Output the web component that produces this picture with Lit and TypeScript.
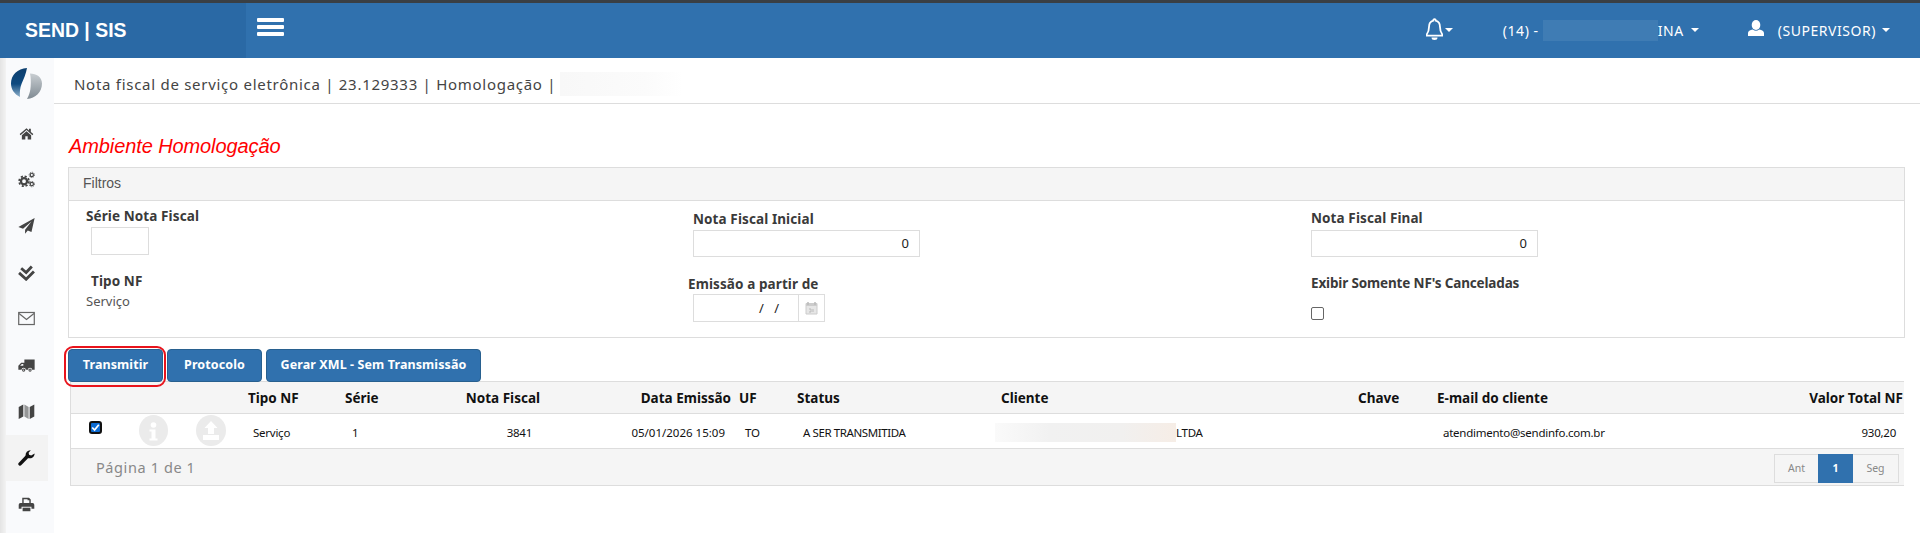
import { LitElement, html, css, svg } from "lit";
import { customElement } from "lit/decorators.js";

const ICONS: Record<string, unknown> = {
  home: svg`<g transform="translate(1.500 1.500) scale(.875)"><path d="M12 3.500 1 13l1.400 1.700L12 6.500l9.600 8.200L23 13l-4-3.400V4.500h-3v2.500z"/><path d="M4.500 14.800 12 8.400l7.500 6.400V21.500h-5.600v-5h-3.800v5H4.500z"/></g>`,
  gears: svg`<circle cx="8.500" cy="14.500" r="4.300" fill="none" stroke-width="3.200"/><circle cx="8.500" cy="14.500" r="7" fill="none" stroke-width="2.400" stroke-dasharray="3 2.500"/><circle cx="19.500" cy="5.500" r="2.300" fill="none" stroke-width="1.700"/><circle cx="19.500" cy="5.500" r="3.800" fill="none" stroke-width="1.200" stroke-dasharray="1.500 1.500"/><circle cx="19.500" cy="18.500" r="2.300" fill="none" stroke-width="1.700"/><circle cx="19.500" cy="18.500" r="3.800" fill="none" stroke-width="1.200" stroke-dasharray="1.500 1.500"/>`,
  plane: svg`<path d="M23.500 1.500 .5 14l6.600 2.600L19 6.500 10 18v5.500l3.800-4.400 5.200 2.100z"/>`,
  check: svg`<path d="M4.500 6l7 6L19.500 3.500" fill="none" stroke-width="4"/><path d="M1.500 12.500l10 9L22.500 10.500" fill="none" stroke-width="4"/>`,
  mail: svg`<rect x="1" y="3.500" width="22" height="17" fill="none" stroke-width="1.700" stroke="#666"/><path d="M1.500 5 12 13.500 22.500 5" fill="none" stroke-width="1.700" stroke="#666"/>`,
  truck: svg`<path d="M9 3.500h14.500V18H20a3 3 0 0 0-6 0h-3a3 3 0 0 0-6 0H.5v-5.500L4.500 8H9z"/><path d="M3 12.200 5.400 9.800H7.500v2.400z" fill="#f9fafc"/><circle cx="8" cy="18.500" r="2.300"/><circle cx="17" cy="18.500" r="2.300"/><circle cx="8" cy="18.500" r=".9" fill="#f9fafc"/><circle cx="17" cy="18.500" r=".9" fill="#f9fafc"/>`,
  map: svg`<path d="M1 5.500 7.500 2v17L1 22.500z"/><path d="M9 2l6 3.500v17L9 19z" opacity=".55"/><path d="M16.500 5.500 23 2v17l-6.500 3.500z"/>`,
  wrench: svg`<path d="M3 21 13 10.500" fill="none" stroke-width="5" stroke-linecap="round"/><path d="M23.500 6.500a6.800 6.800 0 0 1-10.300 5.700L10.800 9.800A6.800 6.800 0 0 1 18 1.800l-3 3.400.6 3 3 .8z"/>`,
  print: svg`<path d="M6 10V2.500h9.500L18 5v5h-2V6h-2.500V4.500H8V10z"/><path d="M3.500 10h17A2.500 2.500 0 0 1 23 12.500V18h-4v-3H5v3H1v-5.500A2.500 2.500 0 0 1 3.500 10z"/><path d="M6.500 16.500h11v5h-11z"/>`,
};

@customElement("app-root")
export class AppRoot extends LitElement {
  static styles = css`
    :host { display: block; width: 1920px; height: 533px; overflow: hidden; background: #fff; font-family: "Noto Sans", sans-serif; color: #333; }
    * { box-sizing: border-box; }
    .strip { height: 3px; background: #3a3f44; }
    .top { height: 55px; display: flex; align-items: stretch; background: #3071ae; color: #fff; }
    .brand { width: 246px; background: #2a69a5; padding: 14px 0 0 25px; font: bold 21px/26px "Liberation Sans", sans-serif; white-space: nowrap; }
    .brand span { display: inline-block; transform: scaleX(.925); transform-origin: left center; }
    .burger { margin: 15px 0 0 11px; width: 27px; height: 18px; display: flex; flex-direction: column; justify-content: space-between; }
    .burger i { display: block; height: 4px; background: #fff; border-radius: 1px; }
    .right { margin-left: auto; display: flex; align-items: flex-start; font-size: 14px; line-height: 20px; }
    .bell { margin: 15px 0 0 0; width: 17px; height: 23px; }
    .caret { width: 0; height: 0; border: 4px solid transparent; border-top-color: #fff; border-bottom: 0; flex: none; }
    .c1 { margin: 25px 50px 0 2px; }
    .t14 { margin-top: 18px; white-space: nowrap; letter-spacing: .55px; }
    .blurbox { width: 115px; height: 21px; margin: 17px 0 0 4px; background: #3f7cb4; }
    .c2 { margin: 25px 49px 0 7px; }
    .user { margin: 17px 14px 0 0; width: 16px; height: 16px; }
    .c3 { margin: 25px 30px 0 6px; }
    .wrap { display: flex; height: 475px; }
    .side { width: 54px; flex: none; padding-left: 6px; background: linear-gradient(90deg, #e4e4e4, #f3f3f3 6px, #f9fafc 6px); }
    .logo { display: block; margin: 10px 0 0 5px; width: 31px; height: 31px; }
    .nav { margin-top: 11px; width: 42px; }
    .item { height: 46.4px; display: flex; align-items: center; justify-content: center; padding-right: 2px; }
    .item.on { background: #f3f3f3; }
    .item svg { width: 17px; height: 17px; fill: #444; stroke: #444; stroke-width: 0; }
    .item.on svg { fill: #111; stroke: #111; }
    .main { flex: 1; min-width: 0; }
    .crumb { height: 46px; border-bottom: 1px solid #ddd; padding: 15px 0 0 20px; display: flex; font-size: 15px; line-height: 22px; letter-spacing: .72px; color: #444; white-space: nowrap; }
    .crumb b { font-weight: 400; }
    .crumb i { display: block; width: 123px; height: 24px; margin: -1px 0 0 4px; background: linear-gradient(90deg, #f8f8f8, #fbfbfb 70%, #fff); }
    .content { padding: 0 15px 0 14px; }
    .title { height: 63px; padding: 30px 0 0 1px; font: italic 20px/24px "Liberation Sans", sans-serif; letter-spacing: -.1px; color: #f00; }
    .panel { border: 1px solid #ddd; height: 171px; }
    .phead { height: 33px; background: #f5f5f5; border-bottom: 1px solid #ddd; padding-left: 14px; font: 14px/31px "Liberation Sans", sans-serif; color: #555; }
    .cols { display: grid; grid-template-columns: 612px 612px 1fr; }
    .lbl { height: 20px; font-size: 13.5px; line-height: 20px; font-weight: 700; letter-spacing: .1px; color: #3a3a3a; white-space: nowrap; }
    .lbl.tight { letter-spacing: -.15px; }
    .col1 { padding: 5px 0 0 17px; }
    .col1 .inp { margin: 1px 0 0 5px; width: 58px; height: 28px; }
    .col1 .l2 { margin: 16px 0 0 5px; }
    .sv { font-size: 13px; line-height: 20px; color: #555; }
    .inp { display: block; border: 1px solid #ddd; background: #fff; text-align: right; padding-right: 10px; font-size: 13px; color: #222; }
    .col2 { padding: 8px 0 0 12px; }
    .col2 .inp { margin-top: 1px; width: 227px; height: 27px; line-height: 25px; }
    .col2 .l2 { margin: 17px 0 0 -5px; }
    .date { display: flex; width: 132px; height: 28px; border: 1px solid #ddd; }
    .date span { width: 105px; border-right: 1px solid #ddd; font-size: 13px; line-height: 26px; padding-left: 65px; word-spacing: 7px; color: #222; }
    .date div { flex: 1; display: flex; align-items: center; justify-content: center; }
    .col3 { padding: 7px 0 0 18px; }
    .col3 .inp { margin-top: 2px; width: 227px; height: 27px; line-height: 25px; }
    .col3 .l2 { margin-top: 16px; }
    .cb { display: block; width: 13px; height: 13px; margin-top: 14px; border: 1px solid #666; border-radius: 2px; background: #fff; }
    .btns { display: flex; gap: 4px; margin-top: 11px; position: relative; height: 33px; }
    .btn { height: 33px; padding: 0; background: #3071ae; border: 1px solid #28608f; border-radius: 4px; color: #fff; font: 700 12.5px/30px "Noto Sans", sans-serif; text-align: center; white-space: nowrap; letter-spacing: .1px; }
    .ring { position: absolute; left: -4px; top: -3px; width: 102px; height: 41px; border: 2px solid #e8141c; border-radius: 9px; pointer-events: none; }
    .tbl { margin-left: 2px; margin-top: -1px; margin-right: 1px; border: 1px solid #ddd; border-width: 1px 0 1px 1px; }
    .grid { display: grid; grid-template-columns: 169px 100px 100px 105px 190px 55px 205px 355px 80px 270px 204px; white-space: nowrap; }
    .th { height: 32px; background: #f5f5f5; border-bottom: 1px solid #ddd; }
    .th div { font: 700 13.5px/32px "Noto Sans", sans-serif; color: #111; }
    .td { height: 35px; border-bottom: 1px solid #ddd; }
    .td > div { font-size: 11.5px; line-height: 37px; color: #111; letter-spacing: -.25px; }
    .td > div.dt { letter-spacing: 0; }
    .td > div.st { letter-spacing: -.4px; }
    .r { text-align: right; }
    .act { position: relative; }
    .tick { position: absolute; left: 18px; top: 7px; width: 13px; height: 13px; display: block; }
    .round { position: absolute; top: 1px; width: 29px; height: 31px; border-radius: 50%; background: #ebebeb; }
    .round svg { display: block; width: 100%; height: 100%; }
    .cl { display: flex; align-items: center; }
    .cl i { display: block; width: 181px; height: 19px; background: linear-gradient(90deg, #fafafa, #f1f1f1 30%, #f1f0ef 70%, #f6ede6); }
    .cl span { line-height: 19px; }
    .foot { height: 36px; background: #f5f5f5; display: flex; align-items: flex-start; justify-content: space-between; padding: 0 5px 0 25px; }
    .pg { font-size: 14.5px; line-height: 36px; color: #888; letter-spacing: .6px; }
    .pager { display: flex; margin-top: 5px; height: 29px; border: 1px solid #ddd; font-size: 10.5px; line-height: 27px; color: #888; text-align: center; background: #f5f5f5; }
    .pager span:nth-child(1) { width: 43px; }
    .pager span:nth-child(2) { width: 35px; margin: -1px 0; line-height: 29px; height: 29px; background: #3071ae; color: #fff; font-weight: 700; }
    .pager span:nth-child(3) { width: 45px; }
  `;

  render() {
    return html`
      <div class="strip"></div>
      <header class="top">
        <div class="brand"><span>SEND | SIS</span></div>
        <div class="burger"><i></i><i></i><i></i></div>
        <div class="right">
          <svg class="bell" viewBox="0 0 17 23"><path d="M8.500 1.200a1.400 1.400 0 0 1 1.300 1.500C12.600 3.400 14 5.800 14 9c0 4.300 1 5.800 2.300 7.500v1.200H.7v-1.200C2 14.800 3 13.300 3 9c0-3.200 1.400-5.600 4.200-6.300a1.400 1.400 0 0 1 1.300-1.500z" fill="none" stroke="#fff" stroke-width="1.800"/><path d="M5.500 19.500h6a3 2.500 0 0 1-6 0z" fill="#fff"/></svg>
          <span class="caret c1"></span>
          <span class="t14">(14) -</span><span class="blurbox"></span><span class="t14">INA</span>
          <span class="caret c2"></span>
          <svg class="user" viewBox="0 0 16 16"><ellipse cx="8" cy="5" rx="4.300" ry="5" fill="#fff"/><path d="M0 16v-3c0-2 2-2.800 4.800-3.500a5 5 0 0 0 6.400 0C14 10.200 16 11 16 13v3z" fill="#fff"/></svg>
          <span class="t14">(SUPERVISOR)</span>
          <span class="caret c3"></span>
        </div>
      </header>
      <div class="wrap">
        <aside class="side">
          <svg class="logo" viewBox="0 0 31 31">
            <defs>
              <linearGradient id="lb" x1="0" y1="0" x2="0" y2="1"><stop offset="0" stop-color="#0d3f6e"/><stop offset=".55" stop-color="#0e4a80"/><stop offset="1" stop-color="#8fb0ca"/></linearGradient>
              <linearGradient id="lg" x1="0" y1="0" x2="0" y2="1"><stop offset="0" stop-color="#c9ced2"/><stop offset="1" stop-color="#7f8a92"/></linearGradient>
            </defs>
            <path d="M16 0C6.500 .5 0 7 0 15.500c0 5.500 3 10.500 9 13.500-.5-5 0-9 1.500-13C12.500 11 15 6 16 0z" fill="url(#lb)"/>
            <path d="M19 5.500c6.500 0 12 3.500 12 10 0 8.500-6.500 15-15 15.500 2-3.500 3.500-8 3.700-13C20 13.500 19.800 9 19 5.500z" fill="url(#lg)"/>
          </svg>
          <nav class="nav">
            ${["home", "gears", "plane", "check", "mail", "truck", "map", "wrench", "print"].map(
              (n) => html`<div class="item ${n === "wrench" ? "on" : ""}"><svg viewBox="0 0 24 24">${ICONS[n]}</svg></div>`
            )}
          </nav>
        </aside>
        <main class="main">
          <div class="crumb"><b>Nota fiscal de serviço eletrônica | 23.129333 | Homologação |</b><i></i></div>
          <div class="content">
            <div class="title">Ambiente Homologação</div>
            <section class="panel">
              <div class="phead">Filtros</div>
              <div class="cols">
                <div class="col1">
                  <div class="lbl">Série Nota Fiscal</div>
                  <div class="inp"></div>
                  <div class="lbl l2">Tipo NF</div>
                  <div class="sv">Serviço</div>
                </div>
                <div class="col2">
                  <div class="lbl">Nota Fiscal Inicial</div>
                  <div class="inp">0</div>
                  <div class="lbl l2">Emissão a partir de</div>
                  <div class="date"><span>/ /</span><div>
                    <svg width="13" height="14" viewBox="0 0 13 14"><path d="M1 2.500h11V13H1z" fill="#e6e6e6" stroke="#ccc"/><path d="M1 2h11v3H1z" fill="#ccc"/><path d="M3 1v3M10 1v3" stroke="#bbb" stroke-width="1.500"/><path d="M4 8h2v3H4M8 8v3" fill="none" stroke="#bbb"/></svg>
                  </div></div>
                </div>
                <div class="col3">
                  <div class="lbl">Nota Fiscal Final</div>
                  <div class="inp">0</div>
                  <div class="lbl l2 tight">Exibir Somente NF's Canceladas</div>
                  <div class="cb"></div>
                </div>
              </div>
            </section>
            <div class="btns">
              <div class="btn" style="width:95px">Transmitir</div>
              <div class="btn" style="width:95px">Protocolo</div>
              <div class="btn" style="width:215px">Gerar XML - Sem Transmissão</div>
              <div class="ring"></div>
            </div>
            <div class="tbl">
              <div class="grid th">
                <div></div>
                <div style="padding-left:8px">Tipo NF</div>
                <div style="padding-left:5px">Série</div>
                <div class="r" style="padding-right:5px">Nota Fiscal</div>
                <div class="r" style="padding-right:4px">Data Emissão</div>
                <div style="padding-left:4px">UF</div>
                <div style="padding-left:7px">Status</div>
                <div style="padding-left:6px">Cliente</div>
                <div style="padding-left:8px">Chave</div>
                <div style="padding-left:7px">E-mail do cliente</div>
                <div class="r" style="padding-right:1px">Valor Total NF</div>
              </div>
              <div class="grid td">
                <div class="act">
                  <svg class="tick" viewBox="0 0 13 13"><rect x="1" y="1" width="11" height="11" rx="2" fill="#0b6bd3" stroke="#111" stroke-width="2"/><path d="M3.200 6.500 5.600 9 9.800 3.800" fill="none" stroke="#fff" stroke-width="1.800"/></svg>
                  <span class="round" style="left:68px"><svg viewBox="0 0 29 31"><circle cx="14.500" cy="10" r="2.800" fill="#fff"/><path d="M10.500 14.500h6v9h2v2h-8v-2h2v-7h-2z" fill="#fff"/></svg></span>
                  <span class="round" style="left:125px;width:30px"><svg viewBox="0 0 30 31"><path d="M15 6l6.500 7H18v6h-6v-6H8.500z" fill="#fff"/><path d="M7 20h16v5H7z" fill="#fff"/></svg></span>
                </div>
                <div style="padding-left:13px">Serviço</div>
                <div style="padding-left:12px">1</div>
                <div class="r" style="padding-right:13px">3841</div>
                <div class="r dt" style="padding-right:10px">05/01/2026 15:09</div>
                <div style="padding-left:10px">TO</div>
                <div class="st" style="padding-left:13px">A SER TRANSMITIDA</div>
                <div class="cl"><i></i><span>LTDA</span></div>
                <div></div>
                <div style="padding-left:13px">atendimento@sendinfo.com.br</div>
                <div class="r" style="padding-right:8px">930,20</div>
              </div>
              <div class="foot">
                <div class="pg">Página 1 de 1</div>
                <div class="pager"><span>Ant</span><span>1</span><span>Seg</span></div>
              </div>
            </div>
          </div>
        </main>
      </div>
    `;
  }
}
